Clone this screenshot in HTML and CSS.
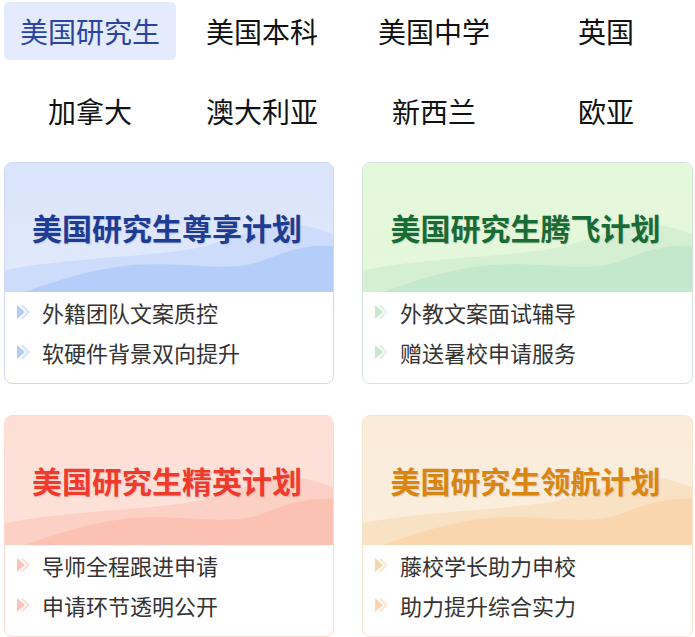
FILE: index.html
```html
<!DOCTYPE html>
<html lang="zh-CN">
<head>
<meta charset="utf-8">
<title>美国研究生</title>
<link rel="stylesheet" href="styles.css">
</head>
<body>
<nav class="tabs">
  <a class="tab active">美国研究生</a>
  <a class="tab">美国本科</a>
  <a class="tab">美国中学</a>
  <a class="tab">英国</a>
  <a class="tab">加拿大</a>
  <a class="tab">澳大利亚</a>
  <a class="tab">新西兰</a>
  <a class="tab">欧亚</a>
</nav>
<section class="cards">
  <div class="card blue">
    <div class="head">
      <svg class="wave" viewBox="0 0 330 130" preserveAspectRatio="none"><path class="w1" d="M0 108 C60 96 120 96 180 88 C230 80 255 62 285 62 C305 62 320 68 330 72 L330 130 L0 130 Z"/><path class="w2" d="M20 130 C60 116 100 102 150 102 C200 102 230 110 260 98 C290 86 310 82 330 84 L330 130 Z"/></svg>
      <h2 class="title">美国研究生尊享计划</h2>
    </div>
    <ul class="list">
      <li><svg class="arrow" viewBox="0 0 13 16"><path class="a2" d="M5 1.5 L11.5 8 L5 14.5"/><path class="a1" d="M0 1 L8 8 L0 15 Z"/></svg>外籍团队文案质控</li>
      <li><svg class="arrow" viewBox="0 0 13 16"><path class="a2" d="M5 1.5 L11.5 8 L5 14.5"/><path class="a1" d="M0 1 L8 8 L0 15 Z"/></svg>软硬件背景双向提升</li>
    </ul>
  </div>
  <div class="card green">
    <div class="head">
      <svg class="wave" viewBox="0 0 330 130" preserveAspectRatio="none"><path class="w1" d="M0 108 C60 96 120 96 180 88 C230 80 255 62 285 62 C305 62 320 68 330 72 L330 130 L0 130 Z"/><path class="w2" d="M20 130 C60 116 100 102 150 102 C200 102 230 110 260 98 C290 86 310 82 330 84 L330 130 Z"/></svg>
      <h2 class="title">美国研究生腾飞计划</h2>
    </div>
    <ul class="list">
      <li><svg class="arrow" viewBox="0 0 13 16"><path class="a2" d="M5 1.5 L11.5 8 L5 14.5"/><path class="a1" d="M0 1 L8 8 L0 15 Z"/></svg>外教文案面试辅导</li>
      <li><svg class="arrow" viewBox="0 0 13 16"><path class="a2" d="M5 1.5 L11.5 8 L5 14.5"/><path class="a1" d="M0 1 L8 8 L0 15 Z"/></svg>赠送暑校申请服务</li>
    </ul>
  </div>
  <div class="card red">
    <div class="head">
      <svg class="wave" viewBox="0 0 330 130" preserveAspectRatio="none"><path class="w1" d="M0 108 C60 96 120 96 180 88 C230 80 255 62 285 62 C305 62 320 68 330 72 L330 130 L0 130 Z"/><path class="w2" d="M20 130 C60 116 100 102 150 102 C200 102 230 110 260 98 C290 86 310 82 330 84 L330 130 Z"/></svg>
      <h2 class="title">美国研究生精英计划</h2>
    </div>
    <ul class="list">
      <li><svg class="arrow" viewBox="0 0 13 16"><path class="a2" d="M5 1.5 L11.5 8 L5 14.5"/><path class="a1" d="M0 1 L8 8 L0 15 Z"/></svg>导师全程跟进申请</li>
      <li><svg class="arrow" viewBox="0 0 13 16"><path class="a2" d="M5 1.5 L11.5 8 L5 14.5"/><path class="a1" d="M0 1 L8 8 L0 15 Z"/></svg>申请环节透明公开</li>
    </ul>
  </div>
  <div class="card orange">
    <div class="head">
      <svg class="wave" viewBox="0 0 330 130" preserveAspectRatio="none"><path class="w1" d="M0 108 C60 96 120 96 180 88 C230 80 255 62 285 62 C305 62 320 68 330 72 L330 130 L0 130 Z"/><path class="w2" d="M20 130 C60 116 100 102 150 102 C200 102 230 110 260 98 C290 86 310 82 330 84 L330 130 Z"/></svg>
      <h2 class="title">美国研究生领航计划</h2>
    </div>
    <ul class="list">
      <li><svg class="arrow" viewBox="0 0 13 16"><path class="a2" d="M5 1.5 L11.5 8 L5 14.5"/><path class="a1" d="M0 1 L8 8 L0 15 Z"/></svg>藤校学长助力申校</li>
      <li><svg class="arrow" viewBox="0 0 13 16"><path class="a2" d="M5 1.5 L11.5 8 L5 14.5"/><path class="a1" d="M0 1 L8 8 L0 15 Z"/></svg>助力提升综合实力</li>
    </ul>
  </div>
</section>
</body>
</html>
```
FILE: styles.css
```css
* { box-sizing: border-box; }
html, body { margin: 0; padding: 0; background: #fff; }
body {
  font-family: "Noto Sans CJK SC", "Noto Sans", sans-serif;
  color: #111;
  width: 695px;
  height: 637px;
  overflow: hidden;
}
.tabs {
  display: grid;
  grid-template-columns: repeat(4, 172px);
  row-gap: 22px;
  padding: 2px 0 0 4px;
}
.tab {
  height: 58px;
  display: flex;
  align-items: center;
  justify-content: center;
  font-size: 28px;
  color: #111;
  border-radius: 5px;
  line-height: 1;
}
.tab.active {
  background: #e3ebfd;
  color: #2a44a0;
}
.cards {
  display: grid;
  grid-template-columns: 330px 331px;
  column-gap: 28px;
  row-gap: 31px;
  padding: 22px 0 0 4px;
}
.card {
  border: 1px solid #ccd8f0;
  border-radius: 8px;
  overflow: hidden;
  background: #fff;
  height: 222px;
}
.head {
  position: relative;
  height: 129px;
  display: flex;
  align-items: center;
  justify-content: center;
  padding: 0 4px 2px 0;
}
.wave {
  position: absolute;
  left: 0;
  bottom: 0;
  width: 100%;
  height: 100%;
  display: block;
}
.title {
  position: relative;
  margin: 0;
  font-size: 30px;
  font-weight: 700;
  line-height: 1;
  letter-spacing: 0;
  text-shadow: 1px 1px 1px rgba(0, 0, 0, 0.12);
}
.list {
  list-style: none;
  margin: 0;
  padding: 0 0 0 12px;
}
.list li {
  display: flex;
  align-items: center;
  height: 40px;
  font-size: 22px;
  color: #333;
}
.arrow {
  width: 13px;
  height: 16px;
  margin-right: 12px;
  flex: none;
}
.arrow .a2 { fill: none; stroke-width: 1.8; }

.blue { border-color: #ccd8f0; }
.blue .head { background: linear-gradient(180deg, #d9e3fa 0%, #e2eafc 100%); }
.blue .w1 { fill: #cddcfb; }
.blue .w2 { fill: #b4cdf9; }
.blue .title { color: #1d3c94; }
.blue .a1 { fill: #b2ccf8; }
.blue .a2 { stroke: #d2e0fb; }

.green { border-color: #d3e4da; }
.green .head { background: linear-gradient(180deg, #e4f8da 0%, #e6f7dc 100%); }
.green .w1 { fill: #d5efd2; }
.green .w2 { fill: #c3e8cb; }
.green .title { color: #196b35; }
.green .a1 { fill: #c4e9cc; }
.green .a2 { stroke: #dcf2df; }

.red { border-color: #fcd9d0; }
.red .head { background: linear-gradient(180deg, #fddfd6 0%, #fde2da 100%); }
.red .w1 { fill: #fcd0c4; }
.red .w2 { fill: #fbc2b3; }
.red .title { color: #ef3a2c; }
.red .a1 { fill: #fbc3b5; }
.red .a2 { stroke: #fddcd4; }

.orange { border-color: #f8e3cc; }
.orange .head { background: linear-gradient(180deg, #faecd9 0%, #faeedd 100%); }
.orange .w1 { fill: #f9e1c4; }
.orange .w2 { fill: #f9d6ae; }
.orange .title { color: #d88512; }
.orange .a1 { fill: #f9d5ac; }
.orange .a2 { stroke: #fbe5cc; }
```
